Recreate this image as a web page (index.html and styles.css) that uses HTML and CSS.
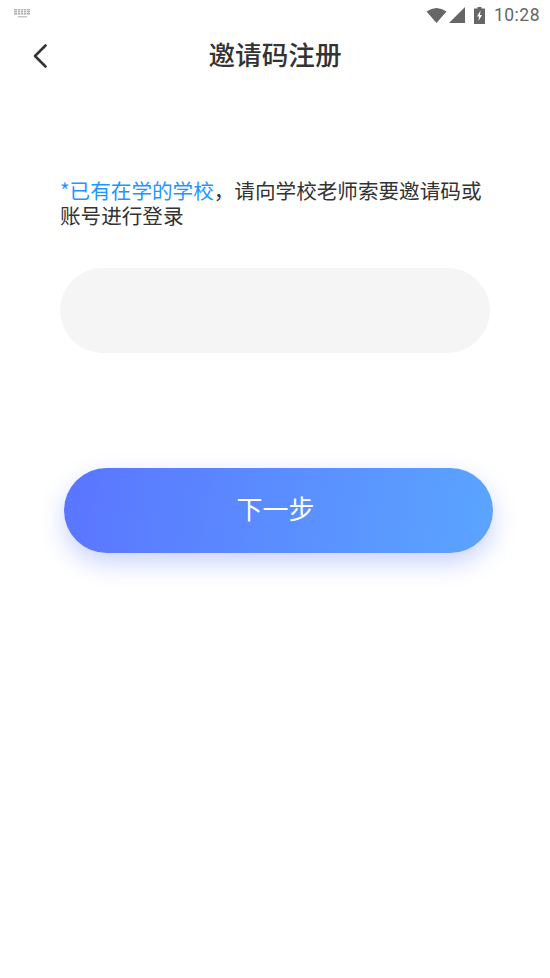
FILE: index.html
```html
<!DOCTYPE html>
<html lang="zh">
<head>
<meta charset="utf-8">
<title>邀请码注册</title>
<link rel="stylesheet" href="styles.css">
</head>
<body>
<div class="status">
  <svg class="kbd" width="18" height="10" viewBox="0 0 18 10"><g fill="#b0b0b0"><rect x="1" y="0" width="16" height="1.4"/><rect x="1" y="2" width="16" height="1.4"/><rect x="1" y="4" width="16" height="1.6"/><rect x="5" y="7" width="9" height="1.4" fill="#c4c4c4"/></g><g fill="#fff"><rect x="4" y="0" width=".7" height="6"/><rect x="7" y="0" width=".7" height="6"/><rect x="10" y="0" width=".7" height="6"/><rect x="13" y="0" width=".7" height="6"/></g></svg>
  <div class="status-right">
    <svg width="21" height="15" viewBox="0 0 21 15"><path d="M0.5 3.5Q10.5-3.5 20.5 3.5L10.5 15Z" fill="#666"/></svg>
    <svg class="sig" width="16" height="16" viewBox="0 0 16 16"><path d="M16 0V16H0Z" fill="#666"/></svg>
    <svg class="bat" width="11" height="17" viewBox="0 0 11 17"><path d="M3.5 0H7.5V1.5H11V17H0V1.5H3.5Z" fill="#666"/><path d="M6.5 3.5L3 9.5H5L4.5 14L8 8H6Z" fill="#fff"/></svg>
    <span class="time">10:28</span>
  </div>
</div>
<header class="nav">
  <svg class="back" width="18" height="26" viewBox="0 0 18 26"><path d="M14.5 2.5L4 13L14.5 23.5" fill="none" stroke="#333" stroke-width="2.6" stroke-linecap="round" stroke-linejoin="round"/></svg>
  <h1 class="title">邀请码注册</h1>
</header>
<main class="content">
  <p class="hint"><span class="accent">*已有在学的学校</span>，请向学校老师索要邀请码或账号进行登录</p>
  <div class="field"></div>
  <button class="next" type="button">下一步</button>
</main>
</body>
</html>
```
FILE: styles.css
```css
* { box-sizing: border-box; }
html, body { margin: 0; padding: 0; background: #fff; }
body { width: 550px; height: 978px; overflow: hidden; font-family: "Noto Sans CJK SC", "Liberation Sans", sans-serif; }
.status { height: 28px; display: flex; justify-content: space-between; align-items: flex-start; padding: 9px 10px 0 13px; }
.kbd { display: block; }
.status-right { display: flex; align-items: center; margin-top: -4px; height: 20px; }
.sig { margin-left: 2px; }
.bat { margin-left: 9px; }
.time { margin-left: 9px; font: 400 17.5px/20px Roboto, sans-serif; color: #666; letter-spacing: .5px; }
.nav { height: 56px; position: relative; display: flex; align-items: center; justify-content: center; }
.back { position: absolute; left: 31px; top: 15px; }
.title { margin: -4px 0 0; font-size: 26.6px; font-weight: 500; color: #333; line-height: 56px; }
.content { display: flex; flex-direction: column; padding: 0 60px; }
.hint { margin: 94px 0 0; font-size: 20.6px; line-height: 24.5px; color: #333; width: 430px; }
.accent { color: #1e96ff; }
.field { margin-top: 41px; width: 430px; height: 85px; border-radius: 43px; background: #f5f5f5; }
.next { margin: 115px 0 0 4px; width: 429px; height: 85px; border: 0; border-radius: 43px; background: linear-gradient(100deg, #5a75ff, #5aa5ff); box-shadow: 0 10px 24px rgba(90, 117, 255, .32); color: #fff; font-family: inherit; font-size: 26px; line-height: 79px; padding: 0 6px 6px 0; }
```
